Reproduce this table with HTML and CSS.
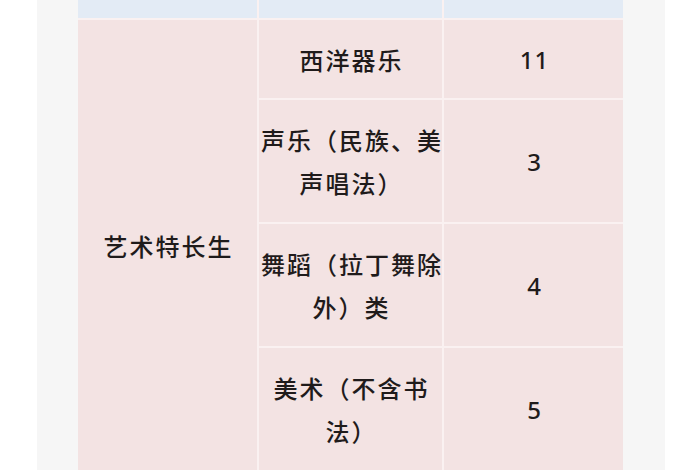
FILE: index.html
```html
<!DOCTYPE html>
<html lang="zh-CN">
<head>
<meta charset="utf-8">
<link rel="stylesheet" href="styles.css">
</head>
<body>
<div class="page">
  <div class="panel">
    <table class="quota">
      <colgroup>
        <col class="c1"><col class="c2"><col class="c3">
      </colgroup>
      <tr class="head"><td></td><td></td><td></td></tr>
      <tr class="r1">
        <td rowspan="4" class="cat">艺术特长生</td>
        <td>西洋器乐</td>
        <td class="num">11</td>
      </tr>
      <tr class="r2">
        <td>声乐（民族、美<br>声唱法）</td>
        <td class="num">3</td>
      </tr>
      <tr class="r3">
        <td>舞蹈（拉丁舞除<br>外）类</td>
        <td class="num">4</td>
      </tr>
      <tr class="r4">
        <td>美术（不含书<br>法）</td>
        <td class="num">5</td>
      </tr>
    </table>
  </div>
</div>
</body>
</html>
```

FILE: styles.css
```css
html, body {
  margin: 0;
  padding: 0;
  background: #ffffff;
}
.page {
  padding-left: 37px;
  width: 628px;
}
.panel {
  background: #f6f6f6;
  padding: 0 42px 0 41px;
  min-height: 480px;
}
.quota {
  width: 545px;
  border-collapse: collapse;
  border-style: hidden;
  table-layout: fixed;
  font-family: "Noto Sans CJK SC", "Noto Sans", sans-serif;
  font-weight: 500;
  font-size: 24px;
  color: #1f1b1b;
}
.c1 { width: 180px; }
.c2 { width: 185px; }
.c3 { width: 180px; }
.quota td {
  border: 2px solid #faf1f1;
  background: #f3e3e3;
  text-align: center;
  vertical-align: middle;
  letter-spacing: 2px;
  padding: 0 0 0 2px;
  line-height: 43px;
  white-space: nowrap;
}
.quota .head td {
  background: #e3ebf5;
  height: 18px;
  padding: 0;
}
.r1 td { height: 78px; }
.r2 td, .r3 td { height: 122px; }
.r4 td { height: 122px; }
.quota .num {
  font-family: "Noto Sans", "Noto Sans CJK SC", sans-serif;
  font-size: 24px;
  letter-spacing: 1px;
}
```
